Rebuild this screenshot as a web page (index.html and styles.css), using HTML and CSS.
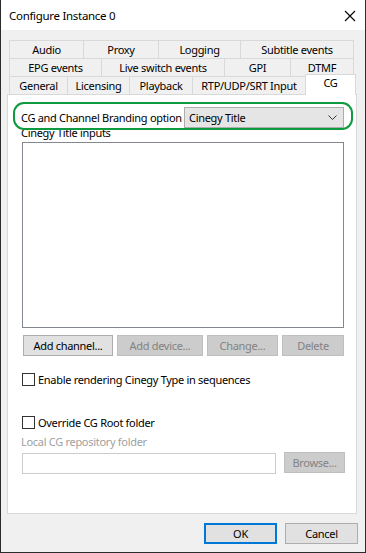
FILE: index.html
```html
<!DOCTYPE html>
<html>
<head>
<meta charset="utf-8">
<link rel="stylesheet" href="styles.css">
</head>
<body>
<div class="window">
  <div class="titlebar">
    <span class="title">Configure Instance 0</span>
    <svg class="close" width="12" height="12" viewBox="0 0 12 12"><path d="M1 1 L11 11 M11 1 L1 11" stroke="#000" stroke-width="1.1" fill="none"/></svg>
  </div>
  <div class="content">
    <div class="tabs">
      <div class="tabrow row1">
        <div class="tab">Audio</div>
        <div class="tab">Proxy</div>
        <div class="tab">Logging</div>
        <div class="tab last">Subtitle events</div>
      </div>
      <div class="tabrow row2">
        <div class="tab">EPG events</div>
        <div class="tab">Live switch events</div>
        <div class="tab">GPI</div>
        <div class="tab last">DTMF</div>
      </div>
      <div class="tabrow row3">
        <div class="tab">General</div>
        <div class="tab">Licensing</div>
        <div class="tab">Playback</div>
        <div class="tab">RTP/UDP/SRT Input</div>
        <div class="tab selected">CG</div>
      </div>
    </div>
    <div class="panel">
      <div class="highlight">
        <span class="label">CG and Channel Branding option</span>
        <div class="combo">
          <span>Cinegy Title</span>
          <svg class="chev" width="9" height="5" viewBox="0 0 9 5"><path d="M0.5 0.5 L4.5 4.5 L8.5 0.5" stroke="#333" stroke-width="1" fill="none"/></svg>
        </div>
      </div>
      <div class="grouplabel">Cinegy Title inputs</div>
      <div class="listbox"></div>
      <div class="btnrow">
        <div class="btn w90">Add channel...</div>
        <div class="btn w86 disabled">Add device...</div>
        <div class="btn w71 disabled">Change...</div>
        <div class="btn w62 disabled">Delete</div>
      </div>
      <div class="check c1"><span class="box"></span><span>Enable rendering Cinegy Type in sequences</span></div>
      <div class="check c2"><span class="box"></span><span>Override CG Root folder</span></div>
      <div class="dimlabel">Local CG repository folder</div>
      <div class="pathrow">
        <div class="textbox"></div>
        <div class="btn browse disabled">Browse...</div>
      </div>
    </div>
    <div class="footer">
      <div class="btn ok">OK</div>
      <div class="btn cancel">Cancel</div>
    </div>
  </div>
</div>
</body>
</html>
```
FILE: styles.css
```css
* { box-sizing: border-box; }
html, body { margin: 0; padding: 0; }
body {
  font-family: "Noto Sans", "DejaVu Sans", sans-serif;
  font-size: 11px;
  letter-spacing: -0.3px;
  color: #000;
  background: #fff;
}
.window {
  width: 366px;
  height: 553px;
  border: 1px solid #2b2b2b;
  border-top: none;
  background: #f0f0f0;
  display: flex;
  flex-direction: column;
}
.titlebar {
  height: 30px;
  background: #fff;
  display: flex;
  align-items: center;
  justify-content: space-between;
  padding: 0 9px 0 8px;
}
.title { font-size: 11.5px; }
.close { margin-top: 1px; }
.content {
  flex: 1;
  display: flex;
  flex-direction: column;
  padding-top: 10px;
}
.tabs {
  margin-left: 8px;
  display: flex;
  flex-direction: column;
}
.tabrow {
  display: grid;
  height: 18px;
}
.row1 { grid-template-columns: 74px 75px 82px 114px; }
.row2 { grid-template-columns: 92px 123px 66px 64px; }
.row3 { grid-template-columns: 58px 62px 63px 113px 51px; height: 18px; }
.tab {
  border-left: 1px solid #d9d9d9;
  border-top: 1px solid #d9d9d9;
  background: #f0f0f0;
  text-align: center;
  line-height: 17px;
  white-space: nowrap;
}
.tab.last { border-right: 1px solid #d9d9d9; }
.tab.selected {
  background: #fff;
  border-right: 1px solid #d9d9d9;
  margin-top: -2px;
  height: 21px;
  line-height: 16px;
  position: relative;
  z-index: 2;
}
.panel {
  margin-left: 6px;
  width: 350px;
  height: 420px;
  background: #fff;
  border: 1px solid #d9d9d9;
  display: flex;
  flex-direction: column;
}
.highlight {
  margin: 7px 0 0 5px;
  width: 340px;
  height: 28px;
  border: 2px solid #0e9a3e;
  border-radius: 11px;
  display: flex;
  align-items: flex-start;
  justify-content: space-between;
  padding: 3px 7px 0 6px;
  position: relative;
  z-index: 1;
}
.label { line-height: 21px; white-space: nowrap; }
.combo {
  flex: none;
  width: 160px;
  height: 21px;
  background: #e5e5e5;
  border: 1px solid #adadad;
  display: flex;
  align-items: center;
  justify-content: space-between;
  padding: 0 6px 0 4px;
}
.grouplabel {
  margin: -5px 0 0 13px;
  line-height: 15px;
  height: 17px;
}
.listbox {
  margin: 0 0 0 14px;
  width: 322px;
  height: 186px;
  border: 1px solid #828790;
  background: #fff;
}
.btnrow {
  display: flex;
  gap: 4px;
  margin: 7px 0 0 15px;
}
.btn {
  height: 21px;
  background: #e1e1e1;
  border: 1px solid #adadad;
  display: flex;
  align-items: center;
  justify-content: center;
  white-space: nowrap;
}
.btn.disabled {
  background: #cccccc;
  border-color: #bfbfbf;
  color: #838383;
}
.w90 { width: 90px; }
.w86 { width: 86px; }
.w71 { width: 71px; }
.w62 { width: 62px; }
.check {
  display: flex;
  align-items: center;
  margin-left: 14px;
  height: 15px;
}
.c1 { margin-top: 16px; }
.c2 { margin-top: 28px; }
.box {
  width: 13px;
  height: 13px;
  border: 1px solid #333;
  background: #fff;
  margin-right: 3px;
}
.dimlabel {
  color: #a0a0a0;
  margin: 4px 0 0 13px;
  line-height: 15px;
}
.pathrow {
  display: flex;
  align-items: flex-start;
  margin: 3px 0 0 14px;
}
.textbox {
  width: 254px;
  height: 21px;
  margin-top: 1px;
  border: 1px solid #cccccc;
  background: #fff;
}
.btn.browse {
  width: 61px;
  height: 21px;
  margin-left: 8px;
}
.footer {
  display: flex;
  justify-content: flex-end;
  gap: 8px;
  padding: 9px 7px 0 0;
}
.ok, .cancel { width: 73px; height: 21px; }
.ok { border: 2px solid #0078d7; }
```
